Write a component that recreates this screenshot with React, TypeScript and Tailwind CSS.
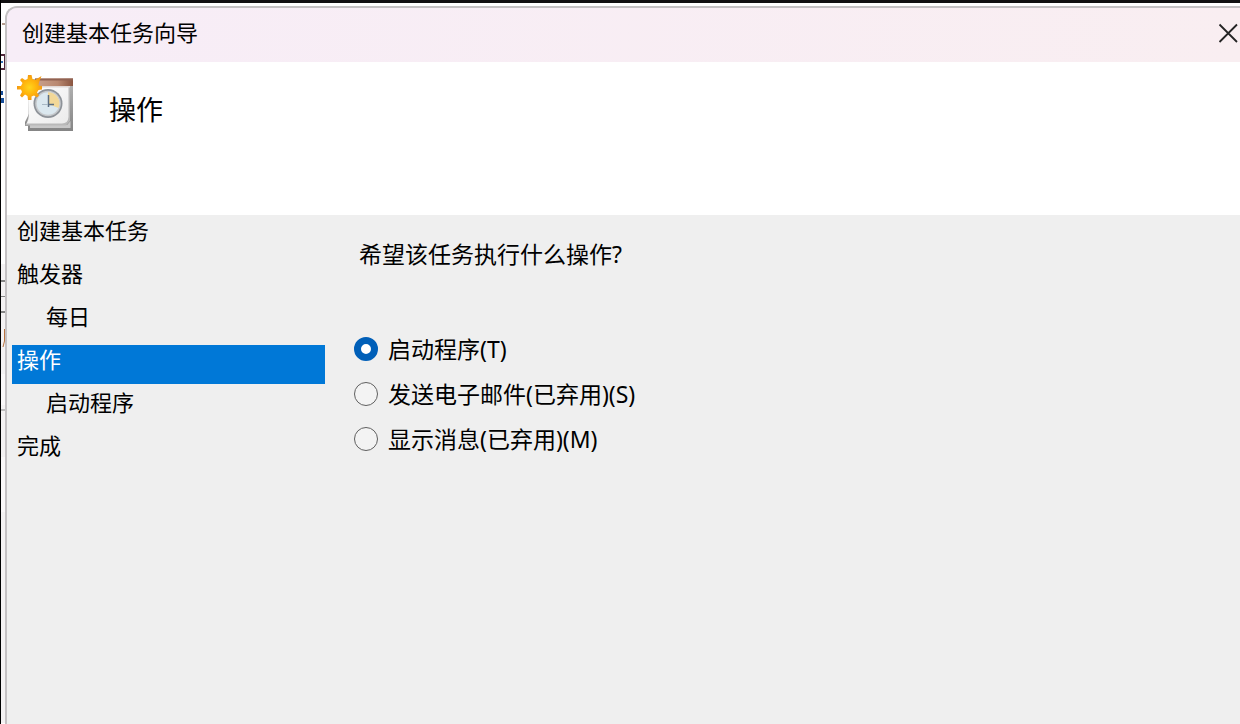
import { useState } from "react";

type Step = { label: string; nested?: boolean; current?: boolean };

const steps: Step[] = [
  { label: "创建基本任务" },
  { label: "触发器" },
  { label: "每日", nested: true },
  { label: "操作", current: true },
  { label: "启动程序", nested: true },
  { label: "完成" },
];

const actions = ["启动程序(T)", "发送电子邮件(已弃用)(S)", "显示消息(已弃用)(M)"];

function TaskIcon() {
  return (
    <svg width="60" height="60" viewBox="0 0 60 60" aria-hidden="true">
      <defs>
        <linearGradient id="paper" x1="0" y1="0" x2="1" y2="1">
          <stop offset="0" stopColor="#ffffff" />
          <stop offset="1" stopColor="#ebebeb" />
        </linearGradient>
        <linearGradient id="band" x1="0" y1="0" x2="1" y2="0">
          <stop offset="0" stopColor="#c9a28e" />
          <stop offset="0.6" stopColor="#b98870" />
          <stop offset="1" stopColor="#8a5540" />
        </linearGradient>
        <linearGradient id="stack" x1="0" y1="0" x2="0" y2="1">
          <stop offset="0" stopColor="#b5b5b5" />
          <stop offset="1" stopColor="#858585" />
        </linearGradient>
        <radialGradient id="sun">
          <stop offset="0" stopColor="#ffd51c" />
          <stop offset="0.6" stopColor="#ffb20c" />
          <stop offset="1" stopColor="#f39a12" />
        </radialGradient>
      </defs>
      <path d="M14 5H56V57H11V52H8V48L12 40Z" fill="url(#stack)" />
      <path d="M13 51H50L53.500 47V54H13Z" fill="#c8c8c8" />
      <path d="M12 12H53V47L49 51.500H8Q11 48 11.500 40Z" fill="#b9b9b9" />
      <path d="M12 12H51.500V43Q51 49.500 45 49.500H9.500Q12 46 12 40Z" fill="url(#paper)" />
      <path d="M18 4.500H56V12H18Z" fill="url(#band)" />
      <path d="M18 4.500H56V6.500H18Z" fill="#916252" />
      <path d="M18 12H53V13.500H18Z" fill="#e0d8d5" />
      <circle cx="31" cy="29.500" r="14.500" fill="#8d9298" />
      <circle cx="31" cy="29.500" r="12.800" fill="#c6c9cc" />
      <circle cx="31" cy="29.500" r="11.300" fill="#dbe8ef" />
      <path d="M31 30V18.300A11.300 11.300 0 0 1 41.500 34Z" fill="#f2d898" />
      <path d="M31.500 21V33M31 30.500H37" stroke="#5c6f82" strokeWidth="1.500" fill="none" />
      <path d="M25 30.500H31" stroke="#a8b8c4" strokeWidth="1" />
      <path
        d="M11 1H14.500L15.500 5L18 6L24.500 2L22 8.500L21.500 11.500L25 12V15.500L21.500 16L20 18.500L22 21.500L20 23.500L17 21.500L14.500 22.500V26H11L10.500 22L8 20.500L5 23.500L3 21.500L5 18L4 15.500H0V12H4L5.500 9L3 6L5 4L8 6L10.500 5Z"
        fill="url(#sun)"
      />
    </svg>
  );
}

/* Sliver of the window that lies behind the wizard. */
function BackgroundEdge() {
  return (
    <svg width="4" height="720" viewBox="1 4 4 720" aria-hidden="true" className="block">
      <path d="M1 4H5V265H1Z" fill="#ffffff" />
      <path d="M1 265H5V724H1Z" fill="#f4f2f3" />
      <path d="M1 375H5V406H1ZM1 458H5V513H1Z" fill="#faf8f9" />
      <path d="M2 25H5" stroke="#6c3a20" />
      <path d="M1 56H5V70H1" stroke="#50283c" strokeWidth="2" fill="none" />
      <path d="M1 63H3" stroke="#3474b8" strokeWidth="2" />
      <path d="M1 92H3V96H1ZM1 99H4V104H1Z" fill="#174f9c" />
      <path d="M1 282H5M1 313H5" stroke="#858585" strokeWidth="2" />
      <path d="M1 297.500H5M1 411H5" stroke="#858585" />
      <path d="M4.500 330V342L3 348" stroke="#b9723d" fill="none" />
    </svg>
  );
}

export default function App() {
  const [selected, setSelected] = useState(0);

  return (
    <div className="flex min-h-screen flex-col overflow-hidden border-l border-black bg-white font-['Noto_Sans','Noto_Sans_CJK_SC',sans-serif] text-black">
      <div className="h-[3px] bg-[#111011]" />
      <div className="flex flex-1">
        <div className="h-0 w-1 shrink-0">
          <BackgroundEdge />
        </div>
        <main className="mt-[3px] flex flex-1 flex-col overflow-hidden rounded-tl-xl border-t-2 border-l-2 border-[#c4c1c3] bg-[#efefef]">
          <header className="flex h-[54px] shrink-0 items-center justify-between bg-linear-to-r from-[#f7edf7] to-[#f9eef1] pb-1 pl-[15px]">
            <h1 className="pb-0.5 text-[22px] leading-8">创建基本任务向导</h1>
            <button type="button" aria-label="关闭" className="flex h-full items-center pl-4">
              <svg width="22" height="22" viewBox="0 0 22 22" fill="none" aria-hidden="true">
                <path d="M1.500 2.500L19 20M19 2.500L1.500 20" stroke="#242424" strokeWidth="1.800" />
              </svg>
            </button>
          </header>

          <section className="flex h-[153px] shrink-0 items-start gap-8 bg-white pt-3 pl-[10px]">
            <TaskIcon />
            <h2 className="pt-4 text-[27px] leading-10">操作</h2>
          </section>

          <div className="flex flex-1">
            <nav aria-label="步骤" className="w-[318px] shrink-0 pt-px pl-[5px]">
              <ol className="flex flex-col gap-1">
                {steps.map((step) => (
                  <li
                    key={step.label}
                    aria-current={step.current ? "step" : undefined}
                    className={`h-[39px] text-[22px] leading-7 ${step.nested ? "pl-[34px]" : "pl-[5px]"} ${
                      step.current ? "bg-[#0078d7] text-white" : ""
                    }`}
                  >
                    {step.label}
                  </li>
                ))}
              </ol>
            </nav>

            <fieldset className="flex-1 pt-[23px] pl-[29px] text-[23px] leading-8">
              <legend className="float-left w-full pl-[5px]">希望该任务执行什么操作?</legend>
              <div className="clear-both flex flex-col gap-[13px] pt-[63px]">
                {actions.map((action, index) => (
                  <label key={action} className="flex items-center gap-[10px] self-start">
                    <input
                      type="radio"
                      name="action"
                      checked={selected === index}
                      onChange={() => setSelected(index)}
                      className="size-6 shrink-0 appearance-none rounded-full border border-[#5f5f5f] bg-[#f3f3f3] checked:border-[7px] checked:border-[#005fb8] checked:bg-white"
                    />
                    <span>{action}</span>
                  </label>
                ))}
              </div>
            </fieldset>
          </div>
        </main>
      </div>
    </div>
  );
}
